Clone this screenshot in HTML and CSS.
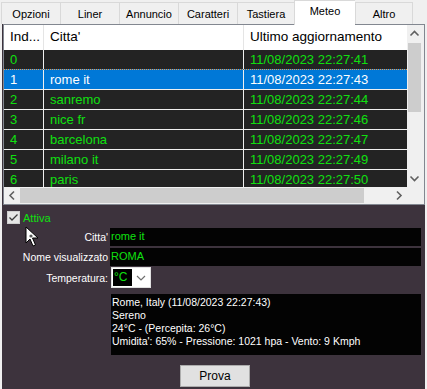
FILE: index.html
```html
<!DOCTYPE html>
<html>
<head>
<meta charset="utf-8">
<link rel="stylesheet" href="styles.css">
</head>
<body>
<div class="tabs">
  <div class="tab">Opzioni</div>
  <div class="tab">Liner</div>
  <div class="tab">Annuncio</div>
  <div class="tab">Caratteri</div>
  <div class="tab">Tastiera</div>
  <div class="tab active">Meteo</div>
  <div class="tab">Altro</div>
</div>
<div class="page">
  <div class="list">
    <div class="viewport">
      <div class="row head">
        <div class="c1">Ind...</div><div class="c2">Citta'</div><div class="c3">Ultimo aggiornamento</div>
      </div>
      <div class="row"><div class="c1">0</div><div class="c2"></div><div class="c3">11/08/2023 22:27:41</div></div>
      <div class="row sel"><div class="c1">1</div><div class="c2">rome it</div><div class="c3">11/08/2023 22:27:43</div></div>
      <div class="row"><div class="c1">2</div><div class="c2">sanremo</div><div class="c3">11/08/2023 22:27:44</div></div>
      <div class="row"><div class="c1">3</div><div class="c2">nice fr</div><div class="c3">11/08/2023 22:27:46</div></div>
      <div class="row"><div class="c1">4</div><div class="c2">barcelona</div><div class="c3">11/08/2023 22:27:47</div></div>
      <div class="row"><div class="c1">5</div><div class="c2">milano it</div><div class="c3">11/08/2023 22:27:49</div></div>
      <div class="row"><div class="c1">6</div><div class="c2">paris</div><div class="c3">11/08/2023 22:27:50</div></div>
    </div>
    <div class="vscroll">
      <svg class="arr" width="15" height="17" viewBox="0 0 15 17"><polyline points="3.5,10.5 7.5,6.5 11.5,10.5" fill="none" stroke="#606060" stroke-width="1.6"/></svg>
      <div class="vtrack"><div class="vthumb"></div></div>
      <svg class="arr" width="15" height="17" viewBox="0 0 15 17"><polyline points="3.5,6.5 7.5,10.5 11.5,6.5" fill="none" stroke="#606060" stroke-width="1.6"/></svg>
    </div>
    <div class="hscroll">
      <svg class="arr" width="16" height="17" viewBox="0 0 16 17"><polyline points="10,4.5 6,8.5 10,12.5" fill="none" stroke="#606060" stroke-width="1.6"/></svg>
      <div class="htrack"><div class="hthumb"></div></div>
      <svg class="arr" width="16" height="17" viewBox="0 0 16 17"><polyline points="6,4.5 10,8.5 6,12.5" fill="none" stroke="#606060" stroke-width="1.6"/></svg>
    </div>
    <div class="corner"></div>
  </div>

  <div class="form">
    <div class="check-row">
      <span class="box"><svg width="11" height="11" viewBox="0 0 11 11"><polyline points="1.5,5.5 4,8 9.5,2.5" fill="none" stroke="#3a3a3a" stroke-width="1.3"/></svg></span>
      <span class="green">Attiva</span>
    </div>
    <div class="grid">
      <label>Citta'</label><div class="field">rome it</div>
      <label>Nome visualizzato</label><div class="field">ROMA</div>
      <label>Temperatura:</label>
      <div class="combo"><span class="cval">°C</span><svg width="14" height="10" viewBox="0 0 14 10"><polyline points="3,3 7,7 11,3" fill="none" stroke="#707070" stroke-width="1.2"/></svg></div>
      <span></span>
      <div class="info">Rome, Italy (11/08/2023 22:27:43)<br>Sereno<br>24°C - (Percepita: 26°C)<br>Umidita': 65% - Pressione: 1021 hpa - Vento: 9 Kmph</div>
    </div>
    <div class="btn-row"><button class="btn">Prova</button></div>
  </div>
</div>
<svg class="cursor" width="18" height="24" viewBox="0 0 18 24"><path d="M1,1 L1,17 L5,13 L8,20 L10.5,19 L7.5,12 L13,12 Z" fill="#fff" stroke="#000" stroke-width="1"/><circle cx="6" cy="10" r="1.6" fill="#555"/></svg>
</body>
</html>
```
FILE: styles.css
```css
* { box-sizing: border-box; }
html, body { margin: 0; padding: 0; }
body {
  width: 427px;
  height: 389px;
  background: #f0f0f0;
  font-family: "Liberation Sans", Arial, sans-serif;
  position: relative;
  overflow: hidden;
}
.tabs {
  display: flex;
  height: 24px;
  align-items: flex-end;
  padding-left: 1px;
}
.tab {
  width: 59px;
  height: 22px;
  border: 1px solid #d9d9d9;
  border-right: none;
  border-bottom: none;
  background: #f0f0f0;
  font-size: 11px;
  display: flex;
  align-items: center;
  justify-content: center;
  padding-top: 1px;
}
.tab:nth-child(5) { width: 57px; }
.tab:last-child { border-right: 1px solid #d9d9d9; width: 58px; }
.tab.active {
  height: 25px;
  margin-bottom: -1px;
  background: #fff;
  border-color: #d9d9d9;
  width: 61px;
  padding-top: 0;
  padding-bottom: 4px;
  position: relative;
  z-index: 2;
}
.page {
  margin-left: 2px;
  width: 423px;
  height: 365px;
  background: #3d333d;
}
.list {
  margin-left: 1px;
  width: 422px;
  height: 181px;
  border: 1px solid #828790;
  background: #f0f0f0;
  display: grid;
  grid-template-columns: 1fr 17px;
  grid-template-rows: 1fr 17px;
}
.viewport {
  overflow: hidden;
  background: #232323;
  font-size: 13px;
}
.row {
  display: flex;
  height: 20px;
  border-bottom: 1px solid #f0f0f0;
  color: #10e010;
  white-space: nowrap;
}
.row > div {
  padding-left: 6px;
  line-height: 20px;
  border-right: 1px solid #f0f0f0;
  flex: none;
}
.c1 { width: 40px; }
.c2 { width: 200px; }
.c3 { width: 200px; }
.row.head {
  height: 25px;
  background: #fff;
  color: #000;
  border-bottom: none;
}
.row.head > div {
  line-height: 24px;
  border-right: 1px solid #e5e5e5;
  font-size: 13.5px;
}
.row.sel {
  background: #0078d7;
  color: #fff;
  border-top: 1px dotted #e89a50;
  margin-top: -1px;
  height: 21px;
}
.vscroll {
  display: flex;
  flex-direction: column;
  background: #f0f0f0;
}
.arr { display: block; flex: none; }
.vtrack { flex: 1; padding: 1px 1px; }
.vthumb { width: 13px; margin-left: 0; height: 69px; background: #cdcdcd; }
.hscroll {
  display: flex;
  background: #f0f0f0;
}
.htrack { flex: 1; padding: 1px 0; }
.hthumb { height: 15px; width: 344px; background: #cdcdcd; }
.corner { background: #f0f0f0; }

.form {
  padding-top: 6px;
  font-size: 10.5px;
  color: #fff;
}
.check-row {
  display: flex;
  align-items: center;
  height: 13px;
  padding-left: 5px;
  gap: 3px;
}
.box {
  width: 13px;
  height: 13px;
  background: #e6e6e6;
  border: 1px solid #cfcfcf;
  display: flex;
  align-items: center;
  justify-content: center;
}
.green { color: #10e010; font-size: 11px; }
.grid {
  margin-top: 4px;
  display: grid;
  grid-template-columns: 106px 311px;
  column-gap: 2px;
  row-gap: 2px;
  align-items: center;
}
.grid label { text-align: right; white-space: nowrap; }
.field {
  height: 18px;
  background: #030303;
  color: #10e010;
  font-size: 11px;
  line-height: 16px;
  padding-left: 1px;
}
.combo {
  margin-left: 1px;
  margin-top: -1px;
  width: 40px;
  height: 21px;
  background: #fff;
  border: 1px solid #e0e0e0;
  display: flex;
  align-items: center;
  padding-left: 1px;
  gap: 2px;
}
.cval {
  width: 19px;
  height: 17px;
  background: #000;
  color: #10e010;
  font-size: 12px;
  line-height: 17px;
  padding-left: 1px;
}
.info {
  margin-left: 1px;
  margin-top: 4px;
  width: 310px;
  height: 61px;
  background: #030303;
  color: #fff;
  font-size: 10.5px;
  line-height: 13px;
  padding: 2px 1px;
}
.btn-row {
  margin-top: 10px;
  padding-left: 178px;
}
.btn {
  width: 70px;
  height: 22px;
  background: #e1e1e1;
  border: 1px solid #adadad;
  font-family: "Liberation Sans", Arial, sans-serif;
  font-size: 12px;
  color: #000;
  padding: 0;
}
.cursor {
  position: absolute;
  left: 25px;
  top: 226px;
}
```
